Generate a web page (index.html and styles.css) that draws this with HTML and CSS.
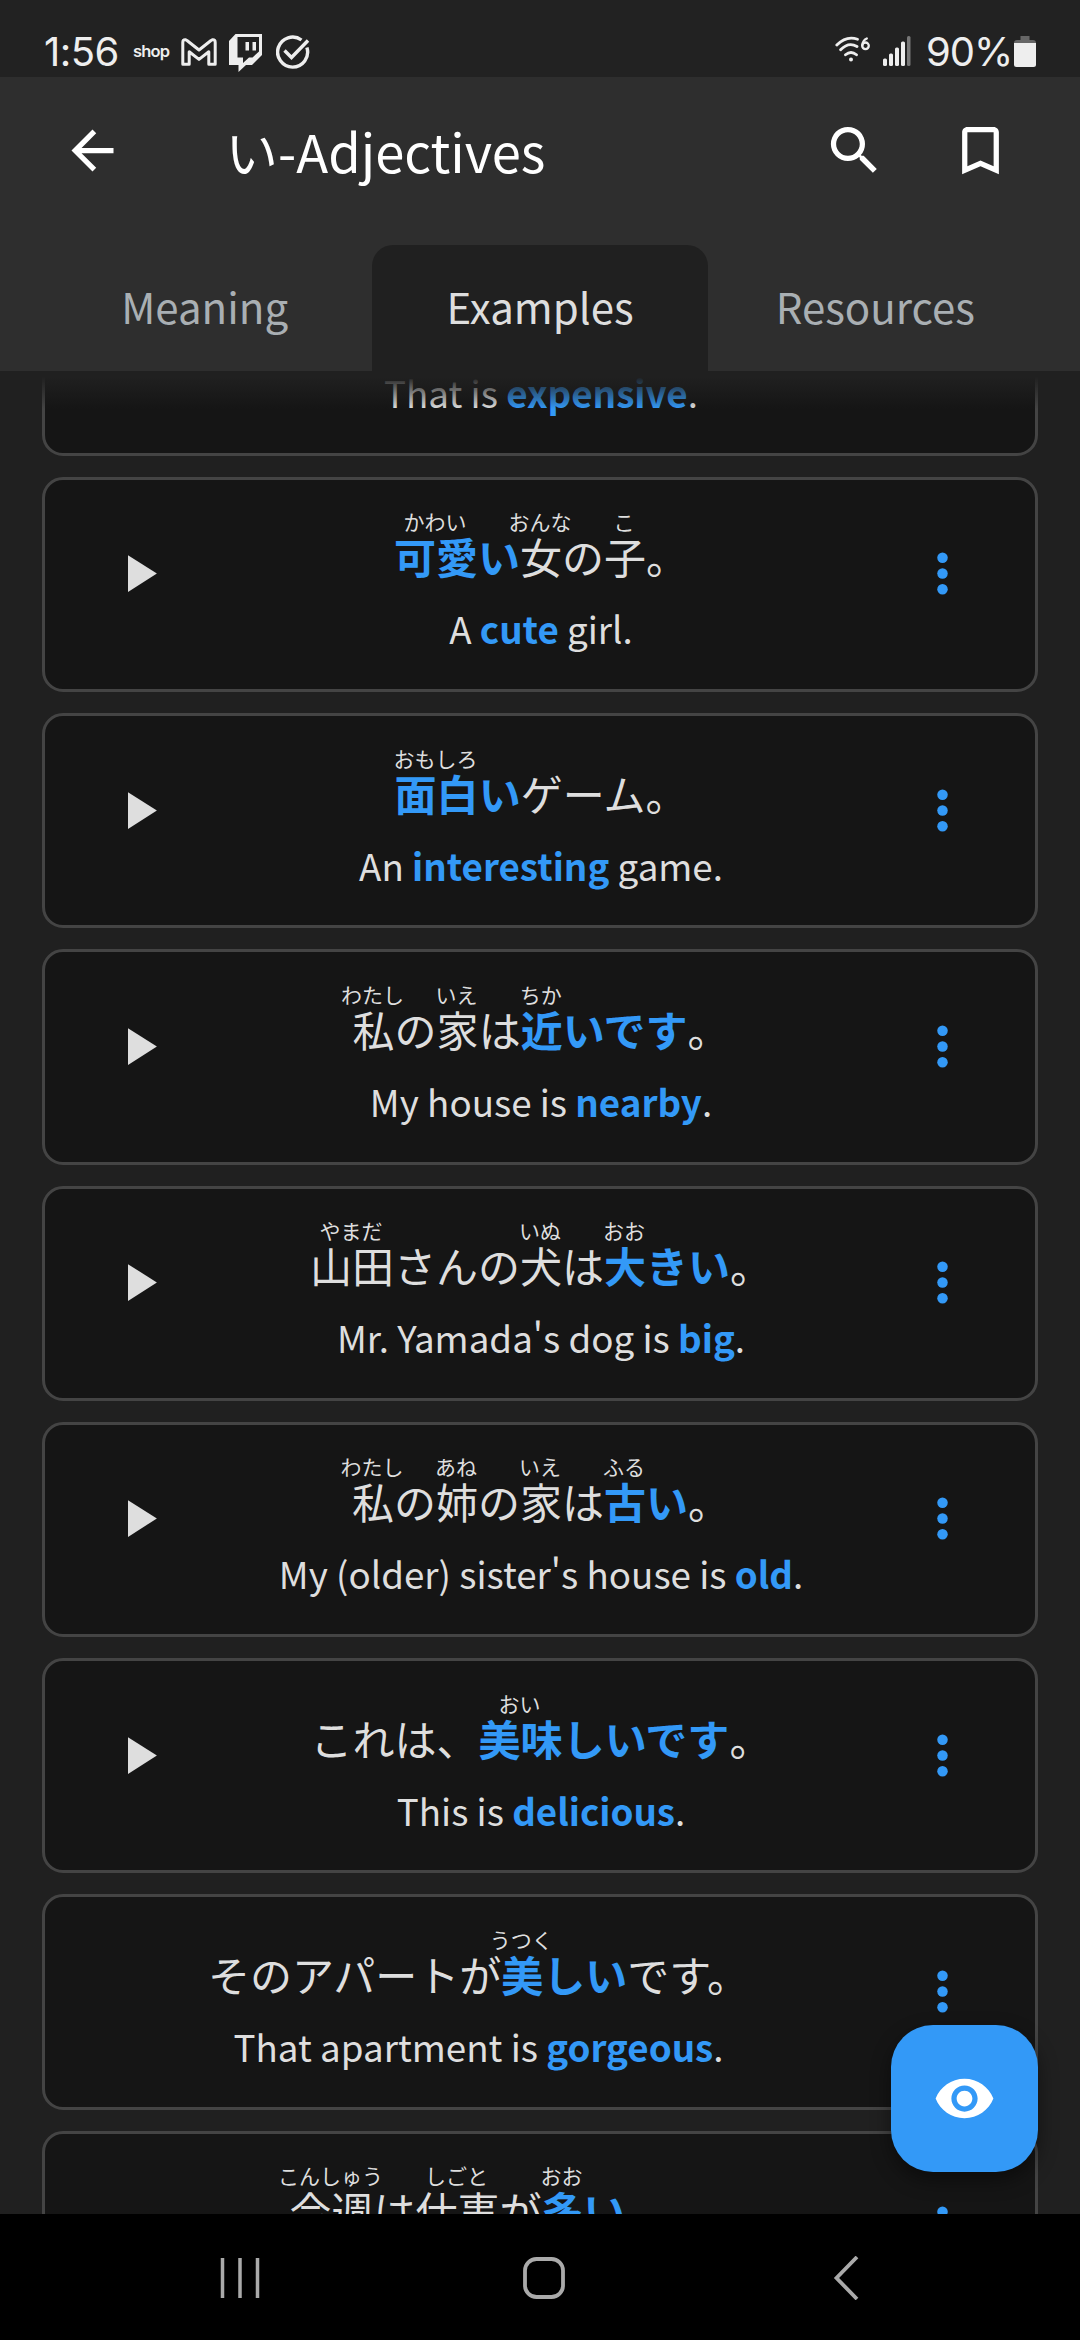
FILE: index.html
```html
<!DOCTYPE html>
<html lang="ja">
<head>
<meta charset="utf-8">
<title>い-Adjectives</title>
<link rel="stylesheet" href="styles.css">
</head>
<body>
<svg class="defs" width="0" height="0">
  <symbol id="play" viewBox="0 0 24 24"><path d="M8 5v14l11-7z"/></symbol>
  <symbol id="more" viewBox="0 0 24 24"><circle cx="12" cy="6" r="2"/><circle cx="12" cy="12" r="2"/><circle cx="12" cy="18" r="2"/></symbol>
</svg>
<div class="screen">
  <div class="status">
    <span class="clock">1:56</span>
    <span class="shop">shop</span>
    <svg class="gmail" width="36" height="28" viewBox="0 0 36 28" fill="none" stroke="#eee" stroke-width="3" stroke-linejoin="round"><path d="M1.800 4.500Q1.800 1.500 4.300 1.700L6 2.500 18 12 30 2.500 31.700 1.700Q34.200 1.500 34.200 4.500V26.300H27.800V13.800L18 21.400 8.200 13.800V26.300H1.800Z"/></svg>
    <svg class="twitch" width="34" height="38" viewBox="0 0 34 38"><path fill="#eee" fill-rule="evenodd" d="M6.500 0H33V21L23 31H17L9.500 38V31H0V7ZM8.500 3V23.500H14V29L20 23.500H23.500L30 17.500V3Z"/><path fill="#eee" d="M16.500 8h3.500v8.500h-3.500zM23.500 8h3.500v8.500h-3.500z"/></svg>
    <svg class="tick" width="34" height="35" viewBox="0 0 34 35" fill="none" stroke="#eee" stroke-width="3.400"><path d="M25.500 5A15 15 0 1 0 30.900 12.500"/><path d="M8.500 15.500L15.500 22.500 32 5.500"/></svg>
    <span class="spacer"></span>
    <svg class="wifi" width="36" height="27" viewBox="0 0 36 27" fill="none" stroke="#eee" stroke-width="2.800" stroke-linecap="round"><path d="M1.800 9Q11.500-.8 22.500 3.200M5.600 13.800Q13.500 5.500 22 10.500M10.500 18.800Q16 14.200 21.500 18.800"/><circle cx="16" cy="23.500" r="2" fill="#eee" stroke="none"/><path stroke-width="2.300" d="M31.800 2.500Q27.500 4.500 27.300 9.500"/><circle cx="30.500" cy="9.800" r="3.300" stroke-width="2.300"/></svg>
    <svg class="signal" width="28" height="30" viewBox="0 0 28 30" fill="#eee"><rect x="0" y="22.500" width="4" height="7.500" rx="1.500"/><rect x="6" y="17.500" width="4" height="12.500" rx="1.500"/><rect x="12" y="11.500" width="4" height="18.500" rx="1.500"/><rect x="18" y="5.500" width="4" height="24.500" rx="1.500"/><rect x="24" y="0" width="3.500" height="30" rx="1.500" fill="#777"/></svg>
    <span class="percent">90%</span>
    <svg class="battery" width="22" height="32" viewBox="0 0 22 32"><path fill="#666" d="M6.500 0h9v4H19q3 0 3 3v1H0V7q0-3 3-3h3.500z"/><path fill="#eee" d="M0 7h22v21.500q0 2.500-2.500 2.500h-17Q0 31 0 28.500z"/></svg>
  </div>
  <header class="appbar">
    <svg class="icon" viewBox="0 0 24 24"><path d="M20 11H7.830l5.590-5.590L12 4l-8 8 8 8 1.410-1.410L7.830 13H20z"/></svg>
    <h1 class="title">い-Adjectives</h1>
    <svg class="icon" viewBox="0 0 24 24"><path d="M15.500 14h-.79l-.28-.27A6.471 6.471 0 0 0 16 9.500 6.500 6.500 0 1 0 9.500 16c1.610 0 3.090-.59 4.230-1.570l.27.28v.79l5 4.990L20.490 19zm-6 0C7.010 14 5 11.990 5 9.500S7.010 5 9.500 5 14 7.010 14 9.500 11.990 14 9.500 14z"/></svg>
    <svg class="icon bookmark" viewBox="0 0 24 24"><path d="M17 3H7c-1.100 0-2 .9-2 2v16l7-3 7 3V5c0-1.100-.9-2-2-2zm0 15l-5-2.180L7 18V5h10z"/></svg>
  </header>
  <nav class="tabs">
    <span class="tab">Meaning</span>
    <span class="tab active">Examples</span>
    <span class="tab">Resources</span>
  </nav>
  <main class="list">
    <div class="card">
      <svg class="icon play"></svg>
      <div class="body"><div class="ja"></div><p class="en">That is <b>expensive</b>.</p></div>
      <svg class="icon more"></svg>
    </div>
    <div class="card">
      <svg class="icon play"><use href="#play"/></svg>
      <div class="body"><div class="ja"><b class="word"><i>かわい</i>可愛</b><b>い</b><span class="word"><i>おんな</i>女</span><span>の</span><span class="word"><i>こ</i>子</span><span>。</span></div><p class="en">A <b>cute</b> girl.</p></div>
      <svg class="icon more"><use href="#more"/></svg>
    </div>
    <div class="card">
      <svg class="icon play"><use href="#play"/></svg>
      <div class="body"><div class="ja"><b class="word"><i>おもしろ</i>面白</b><b>い</b><span>ゲーム。</span></div><p class="en">An <b>interesting</b> game.</p></div>
      <svg class="icon more"><use href="#more"/></svg>
    </div>
    <div class="card">
      <svg class="icon play"><use href="#play"/></svg>
      <div class="body"><div class="ja"><span class="word"><i>わたし</i>私</span><span>の</span><span class="word"><i>いえ</i>家</span><span>は</span><b class="word"><i>ちか</i>近</b><b>いです</b><span>。</span></div><p class="en">My house is <b>nearby</b>.</p></div>
      <svg class="icon more"><use href="#more"/></svg>
    </div>
    <div class="card">
      <svg class="icon play"><use href="#play"/></svg>
      <div class="body"><div class="ja"><span class="word"><i>やまだ</i>山田</span><span>さんの</span><span class="word"><i>いぬ</i>犬</span><span>は</span><b class="word"><i>おお</i>大</b><b>きい</b><span>。</span></div><p class="en">Mr. Yamada's dog is <b>big</b>.</p></div>
      <svg class="icon more"><use href="#more"/></svg>
    </div>
    <div class="card">
      <svg class="icon play"><use href="#play"/></svg>
      <div class="body"><div class="ja"><span class="word"><i>わたし</i>私</span><span>の</span><span class="word"><i>あね</i>姉</span><span>の</span><span class="word"><i>いえ</i>家</span><span>は</span><b class="word"><i>ふる</i>古</b><b>い</b><span>。</span></div><p class="en">My (older) sister's house is <b>old</b>.</p></div>
      <svg class="icon more"><use href="#more"/></svg>
    </div>
    <div class="card">
      <svg class="icon play"><use href="#play"/></svg>
      <div class="body"><div class="ja"><span>これは、</span><b class="word"><i>おい</i>美味</b><b>しいです</b><span>。</span></div><p class="en">This is <b>delicious</b>.</p></div>
      <svg class="icon more"><use href="#more"/></svg>
    </div>
    <div class="card">
      <div class="body"><div class="ja"><span>そのアパートが</span><b class="word"><i>うつく</i>美</b><b>しい</b><span>です。</span></div><p class="en">That apartment is <b>gorgeous</b>.</p></div>
      <svg class="icon more"><use href="#more"/></svg>
    </div>
    <div class="card">
      <div class="body"><div class="ja"><span class="word"><i>こんしゅう</i>今週</span><span>は</span><span class="word"><i>しごと</i>仕事</span><span>が</span><b class="word"><i>おお</i>多</b><b>い</b><span>。</span></div></div>
      <svg class="icon more"><use href="#more"/></svg>
    </div>
    <div class="fade"></div>
    <div class="fab"><svg class="icon" viewBox="0 0 24 24"><path d="M12 4.500C7 4.500 2.730 7.610 1 12c1.730 4.390 6 7.500 11 7.500s9.270-3.110 11-7.500c-1.730-4.390-6-7.500-11-7.500zM12 17c-2.760 0-5-2.240-5-5s2.240-5 5-5 5 2.240 5 5-2.240 5-5 5zm0-8c-1.660 0-3 1.340-3 3s1.340 3 3 3 3-1.340 3-3-1.340-3-3-3z"/></svg></div>
  </main>
  <footer class="navbar">
    <svg width="42" height="44" viewBox="0 0 42 44" fill="none" stroke="#aaa" stroke-width="3.500"><path d="M3.500 2v40M21 2v40M38.500 2v40"/></svg>
    <svg width="42" height="44" viewBox="0 0 42 44" fill="none" stroke="#aaa" stroke-width="3.800"><rect x="2" y="3" width="38" height="38" rx="11.500"/></svg>
    <svg width="42" height="44" viewBox="0 0 42 44" fill="none" stroke="#aaa" stroke-width="3.800"><path d="M31 1L10.500 22 31 43"/></svg>
  </footer>
</div>
</body>
</html>
```
FILE: styles.css
```css
* { box-sizing: border-box; }

body {
  margin: 0;
  background: #202020;
  color: #dedede;
  font-family: "Noto Sans CJK JP", "Noto Sans", sans-serif;
}

.defs { position: absolute; }

.screen {
  display: flex;
  flex-direction: column;
  width: 1080px;
  height: 2340px;
  overflow: hidden;
}

/* status bar */
.status {
  display: flex;
  align-items: flex-start;
  height: 77px;
  padding: 0 44px 0 44px;
  background: #222;
  color: #eee;
  font-family: Inter, Roboto, sans-serif;
}
.clock, .percent { margin-top: 27px; font-size: 40px; line-height: 50px; letter-spacing: -0.5px; }
.clock { width: 89px; }
.shop { width: 48px; margin-top: 40px; font-size: 16.5px; font-weight: 600; line-height: 22px; letter-spacing: -0.8px; }
.gmail { margin-top: 38px; }
.twitch { margin: 34px 0 0 12px; }
.tick { margin: 35px 0 0 13px; }
.spacer { flex: 1; }
.wifi { margin: 36px 12px 0 0; }
.signal { margin: 36px 15px 0 0; }
.percent { width: 88px; letter-spacing: -1px; white-space: nowrap; }
.battery { margin-top: 36px; }

/* app bar */
.icon { flex: none; width: 63px; height: 63px; fill: #fff; }
.appbar {
  display: flex;
  align-items: center;
  height: 146px;
  padding: 0 68px 0 60.5px;
  background: #2e2e2e;
}
.title {
  flex: 1;
  margin: 0 0 0 102px;
  color: #fff;
  font-size: 52.5px;
  font-weight: 400;
  line-height: 76px;
}
.bookmark { margin-left: 63px; }

/* tabs */
.tabs {
  display: flex;
  height: 148px;
  padding: 22px 37px 0;
  background: #2e2e2e;
}
.tab {
  flex: 1;
  padding-top: 31px;
  color: #a9afb3;
  font-size: 42px;
  line-height: 60px;
  text-align: center;
}
.tab.active { border-radius: 21px 21px 0 0; background: #202020; color: #dedede; }

/* example list */
.list {
  position: relative;
  flex: 1;
  overflow: hidden;
  padding: 0 42px;
}
.card {
  display: flex;
  height: 215.25px;
  margin-bottom: 21px;
  padding: 33.5px 61px 0 42px;
  border: 3px solid #444;
  border-radius: 21px;
  background: #151515;
}
.card:first-child { margin-top: -130.500px; }
.play { margin: 29px 42px 0 20px; fill: #dedede; }
.more { margin: 29px 0 0 41px; fill: #3399f7; }
.body { flex: 1; min-width: 0; }
.ja {
  display: flex;
  align-items: flex-end;
  justify-content: center;
  height: 64px;
  font-size: 42px;
  line-height: 42px;
  white-space: nowrap;
}
.word { display: flex; flex-direction: column; align-items: center; }
.word i {
  display: flex;
  justify-content: center;
  width: 0;
  margin: 0 2px 3px 0;
  color: #dedede;
  font-size: 21px;
  font-style: normal;
  font-weight: 400;
  line-height: 21px;
}
.card b { color: #3399f7; font-weight: 700; }
.en {
  margin: 24px 0 0;
  font-size: 36.75px;
  line-height: 54px;
  text-align: center;
  white-space: nowrap;
}
.fade {
  position: absolute;
  top: 0;
  left: 0;
  right: 0;
  height: 38px;
  background: linear-gradient(#202020 15%, rgba(32, 32, 32, 0));
}
.fab {
  position: absolute;
  right: 42px;
  bottom: 42px;
  display: flex;
  align-items: center;
  justify-content: center;
  width: 147px;
  height: 147px;
  border-radius: 42px;
  background: #3399f7;
  box-shadow: 0 8px 20px rgba(0, 0, 0, 0.45);
}

/* system navigation */
.navbar {
  display: flex;
  align-items: center;
  justify-content: space-between;
  height: 126px;
  padding: 2px 212px 0 219px;
  background: #000;
}
```
